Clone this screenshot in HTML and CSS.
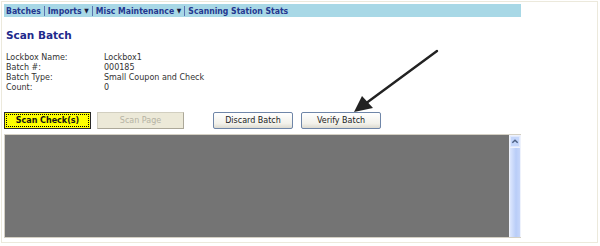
FILE: index.html
```html
<!DOCTYPE html>
<html lang="en">
<head>
    <meta charset="UTF-8">
    <title>Scan Batch</title>
    <link rel="stylesheet" href="styles.css">
</head>
<body>

    <div class="frame">
        <!-- Top menu -->
        <div class="menu">
            <a href="#">Batches</a><span class="sep"></span>
            <a href="#">Imports <span class="caret">&#9660;</span></a><span class="sep"></span>
            <a href="#">Misc Maintenance <span class="caret">&#9660;</span></a><span class="sep"></span>
            <a href="#">Scanning Station Stats</a>
        </div>

        <h2 class="title">Scan Batch</h2>

        <!-- Batch details -->
        <div class="details">
            <span>Lockbox Name:</span><span>Lockbox1</span>
            <span>Batch #:</span><span>000185</span>
            <span>Batch Type:</span><span>Small Coupon and Check</span>
            <span>Count:</span><span>0</span>
        </div>

        <!-- Buttons -->
        <div class="actions">
            <button class="btn btn-scan">Scan Check(s)</button>
            <button class="btn btn-disabled" disabled>Scan Page</button>
            <button class="btn btn-plain btn-discard">Discard Batch</button>
            <button class="btn btn-plain">Verify Batch</button>
        </div>

        <!-- Image viewer -->
        <div class="viewer">
            <div class="viewer-body"></div>
            <div class="scrollbar">
                <div class="scroll-up">
                    <svg width="9" height="9" viewBox="0 0 9 9"><path d="M1.5 6 L4.5 3 L7.5 6" fill="none" stroke="#4d6185" stroke-width="1.6"/></svg>
                </div>
                <div class="scroll-track"></div>
            </div>
        </div>

        <!-- Callout arrow -->
        <svg class="callout" width="100" height="70" viewBox="0 0 100 70">
            <line x1="86" y1="2" x2="14" y2="55" stroke="#222" stroke-width="2.4" stroke-linecap="round"/>
            <polygon points="3,63 11,47 22,59" fill="#222"/>
        </svg>
    </div>

</body>
</html>
```

FILE: styles.css
```css
body {
    margin: 0;
    background-color: #ffffff;
    font-family: "DejaVu Sans", Verdana, sans-serif;
}

.frame {
    position: relative;
    width: 597px;
    height: 242px;
    margin: 1px 0 0 1px;
    border: 1px solid #ece9dc;
    padding: 0;
    box-sizing: border-box;
}

.menu {
    margin: 2px 0 0 2px;
    width: 517px;
    height: 13px;
    background-color: #a8d8e6;
    display: flex;
    align-items: center;
    padding-left: 2px;
    box-sizing: border-box;
    font-family: "DejaVu Sans Condensed", "DejaVu Sans", sans-serif;
    font-size: 8.6px;
    font-weight: bold;
    white-space: nowrap;
}

.menu a {
    color: #24378f;
    text-decoration: none;
}

.menu .caret {
    font-size: 6.5px;
    color: #1c1c40;
    vertical-align: 1px;
}

.menu .sep {
    display: inline-block;
    width: 1px;
    height: 10px;
    background-color: #5a74b0;
    margin: 0 3px;
}

.title {
    margin: 11px 0 0 4px;
    font-size: 10.5px;
    font-weight: bold;
    color: #1e2a8c;
    line-height: 14px;
}

.details {
    display: grid;
    grid-template-columns: 98px auto;
    margin: 11px 0 0 4px;
    font-size: 8px;
    line-height: 10px;
    color: #333333;
}

.actions {
    display: flex;
    margin: 19px 0 0 2px;
    height: 17px;
}

.btn {
    height: 17px;
    font-family: "DejaVu Sans", Verdana, sans-serif;
    font-size: 8px;
    padding: 0;
    box-sizing: border-box;
    border-radius: 2px;
}

.btn-scan {
    width: 87px;
    background-color: #ffff00;
    border: 1px solid #2a2a2a;
    outline: 1px dotted #000000;
    outline-offset: -3px;
    font-weight: bold;
    color: #111111;
    border-radius: 0;
}

.btn-disabled {
    width: 87px;
    margin-left: 6px;
    background-color: #ece9d8;
    border: 1px solid #d2cfc0;
    border-right-color: #aca899;
    border-bottom-color: #aca899;
    color: #b6b3a4;
    border-radius: 0;
}

.btn-plain {
    width: 80px;
    background: linear-gradient(#ffffff, #f2f1ea 70%, #dcdad0);
    border: 1px solid #6f86a8;
    color: #222222;
}

.btn-discard {
    margin-left: 29px;
    margin-right: 8px;
}

.viewer {
    display: flex;
    margin: 5px 0 0 2px;
    width: 517px;
    height: 104px;
    border-top: 1px solid #d4d0c4;
    border-left: 1px solid #d4d0c4;
    border-bottom: 1px solid #d4d0c4;
    box-sizing: border-box;
}

.viewer-body {
    flex: 1;
    background-color: #747474;
}

.scrollbar {
    width: 12px;
    display: flex;
    flex-direction: column;
    background-color: #eef2fc;
}

.scroll-up {
    height: 11px;
    margin: 1px 1px 0 1px;
    background-color: #c4d6fb;
    border: 1px solid #dfe8fd;
    box-sizing: border-box;
    display: flex;
    align-items: center;
    justify-content: center;
}

.scroll-track {
    flex: 1;
    margin: 1px 1px 0 1px;
    background: linear-gradient(90deg, #dde7fd, #b9cdf8 60%, #c6d6fa);
}

.callout {
    position: absolute;
    left: 349px;
    top: 47px;
}
```
